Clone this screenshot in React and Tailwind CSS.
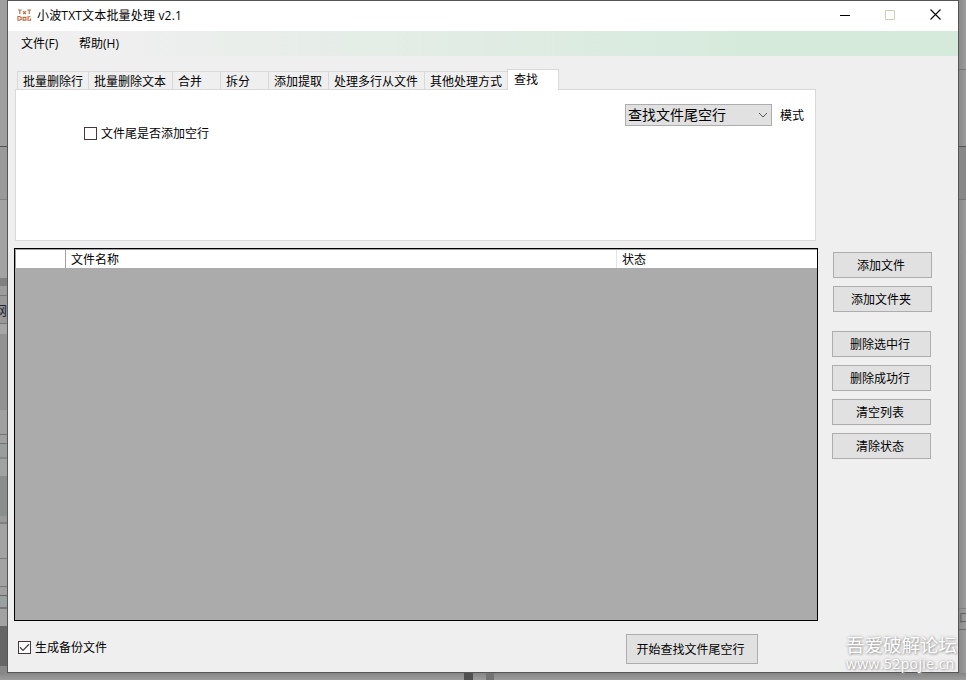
import React, { useState } from 'react';

const tabs = [
  { label: '批量删除行', width: 'w-[71px]' },
  { label: '批量删除文本', width: 'w-[84px]' },
  { label: '合并', width: 'w-[48px]' },
  { label: '拆分', width: 'w-[48px]' },
  { label: '添加提取', width: 'w-[60px]' },
  { label: '处理多行从文件', width: 'w-[96px]' },
  { label: '其他处理方式', width: 'w-[83px]' },
  { label: '查找', width: 'w-[52px]' },
];

// bands of the page that shows behind the window, top to bottom
const leftBands = [
  'h-[147px] bg-[#9f9f9f] border-b border-[#555555]',
  'h-[53px] bg-[#9a9a9a] border-b border-[#858585]',
  'h-[78px] bg-[#a3a3a3]',
  'h-[8px] bg-[#808080]',
  'h-[10px] bg-[#9c9c9c] border-b border-[#777777]',
];

const lowerBands = [
  'h-[10px] bg-[#a5a5a5]',
  'h-[76px] bg-[#929292]',
  'h-[25px] bg-[#a0a0a0] border-b border-[#747474]',
  'h-[9px] bg-[#a0a0a0] border-b border-[#747474]',
  'h-[15px] bg-[#999e9c] border-b-2 border-[#858a88]',
  'h-[17px] bg-[#a0a3a2]',
  'h-[40px] bg-[#8a8e8c]',
  'h-[8px] bg-[#999999] border-b-2 border-[#808080]',
  'h-[35px] bg-[#a2a2a2] border-b border-[#7c7c7c]',
  'h-[28px] bg-[#a2a2a2] border-b border-[#777777]',
  'h-[9px] bg-[#a0a0a0] border-b border-[#666666]',
  'h-[13px] bg-[#9aa09f] border-b-2 border-[#777777]',
  'h-[17px] bg-[#a2a2a2]',
  'h-[40px] bg-[#666666]',
  'h-[8px] bg-[#888888] border-b border-[#666666]',
];

const Button = ({ children, className = 'w-[99px] h-[26px]' }) => (
  <button className={`flex shrink-0 items-center justify-center border border-[#adadad] bg-[#e1e1e1] pt-[2px] pr-[3px] whitespace-nowrap ${className}`}>
    {children}
  </button>
);

const CheckBox = ({ label, defaultChecked = false }) => {
  const [checked, setChecked] = useState(defaultChecked);

  return (
    <button onClick={() => setChecked(!checked)} className="flex h-[13px] items-center gap-[4px] leading-[13px]">
      <span className="h-[13px] w-[13px] border border-[#4a3540] bg-white">
        {checked && (
          <svg width="11" height="11" viewBox="0 0 11 11" fill="none" stroke="#444444" strokeWidth="1.3">
            <path d="M1 5.3 L4 8.4 L10 2.3" />
          </svg>
        )}
      </span>
      <span className="whitespace-nowrap">{label}</span>
    </button>
  );
};

const TitleBar = () => (
  <div className="flex h-[30px] items-center bg-white">
    <svg className="mb-[2px] ml-[9px]" width="15" height="14" viewBox="0 0 16 14" fill="none" stroke="#c0683c" strokeWidth="1.2">
      <path d="M1 1.6h4M3 1.6v4.4M6.5 3l3 3M9.5 3l-3 3M11 1.6h4M13 1.6v4.4" />
      <path d="M1 8.6v4h1.5l2-1v-2l-2-1zM6.5 9.5v3h3v-3zM14.5 8.8h-2.8v3.8h2.8v-2" />
    </svg>
    <span className="ml-[5px] text-[12px] leading-[16px] tracking-[0.18px] whitespace-nowrap">小波TXT文本批量处理 v2.1</span>
    <div className="mr-[17px] mb-[3px] ml-auto flex items-center gap-[35px]">
      <svg width="10" height="11" viewBox="0 0 10 11" stroke="#000">
        <path d="M0 6.5h10" />
      </svg>
      <svg width="10" height="11" viewBox="0 0 10 11" fill="none" stroke="#d5c9b8">
        <path d="M.5 1.5h9v9h-9z" />
      </svg>
      <svg width="11" height="11" viewBox="0 0 11 11" stroke="#000" strokeWidth="1.1">
        <path d="M.5 .5l10 10M10.5 .5l-10 10" />
      </svg>
    </div>
  </div>
);

const MenuBar = () => (
  <div className="flex h-[25px] items-center bg-linear-to-r from-[#efefef] from-10% to-[#d5eadb] to-80% text-[12px]">
    <span className="ml-[13px] w-[58px]">文件(F)</span>
    <span>帮助(H)</span>
  </div>
);

const TabControl = () => {
  const [active, setActive] = useState('查找');

  return (
    <div className="ml-[7px] w-[801px]">
      <div className="flex h-[20px] items-end pl-[2px]">
        {tabs.map((tab) => (
          <button
            key={tab.label}
            onClick={() => setActive(tab.label)}
            className={`shrink-0 border-t border-l border-[#d9d9d9] text-left whitespace-nowrap ${tab.width} ${
              active === tab.label
                ? 'relative top-px h-[21px] border-r bg-white pb-px pl-[6px]'
                : 'h-[18px] bg-[#efefef] pt-px pl-[5px]'
            }`}
          >
            {tab.label}
          </button>
        ))}
      </div>
      <div className="flex h-[152px] items-start border border-[#d9d9d9] bg-white">
        <div className="mt-[37px] ml-[68px]">
          <CheckBox label="文件尾是否添加空行" />
        </div>
        <div className="mt-[14px] mr-[11px] ml-auto flex items-center gap-[8px]">
          <div className="flex h-[22px] w-[147px] items-center justify-between border border-[#adadad] bg-[#e1e1e1] pr-[3px] pl-[2px] text-[14px] leading-[20px]">
            查找文件尾空行
            <svg width="10" height="6" viewBox="0 0 10 6" fill="none" stroke="#555555">
              <path d="M1 1l4 4 4-4" />
            </svg>
          </div>
          <span className="pt-[2px]">模式</span>
        </div>
      </div>
    </div>
  );
};

const FileGrid = () => (
  <div className="flex h-[373px] w-[804px] flex-col border border-black bg-[#ababab]">
    <div className="flex h-[19px] border-t border-l border-[#a0a0a0] bg-white leading-[20px]">
      <div className="w-[50px] border-r border-[#a0a0a0]" />
      <div className="w-[551px] border-r border-[#e5e5e5] pl-[5px]">文件名称</div>
      <div className="pl-[5px]">状态</div>
    </div>
  </div>
);

const Window = () => (
  <div className="relative flex h-[673px] w-[952px] flex-col border border-[#555555] bg-[#efefef]">
    <TitleBar />
    <MenuBar />
    <div className="flex flex-col pt-[13px]">
      <TabControl />
      <div className="mt-[7px] ml-[6px] flex">
        <FileGrid />
        <div className="flex flex-col gap-[8px] pt-[4px] pl-[14px]">
          <div className="ml-px flex flex-col gap-[8px]">
            <Button>添加文件</Button>
            <Button>添加文件夹</Button>
          </div>
          <div className="mt-[11px] flex flex-col gap-[8px]">
            <Button>删除选中行</Button>
            <Button>删除成功行</Button>
            <Button>清空列表</Button>
            <Button>清除状态</Button>
          </div>
        </div>
      </div>
      <div className="mt-[13px] flex items-start">
        <div className="mt-[7px] ml-[10px] w-[608px]">
          <CheckBox label="生成备份文件" defaultChecked />
        </div>
        <Button className="h-[30px] w-[132px]">开始查找文件尾空行</Button>
      </div>
    </div>
    <div className="absolute right-0 bottom-0 flex w-[112px] flex-col whitespace-nowrap text-white [text-shadow:0_0_3px_#999,1px_1px_2px_#aaa]">
      <span className="font-['Noto_Sans_CJK_SC',sans-serif] text-[18.5px] leading-[22px]">吾爱破解论坛</span>
      <span className="font-['Open_Sans',sans-serif] text-[14px] leading-[17px] font-medium tracking-[0.4px]">www.52pojie.cn</span>
    </div>
  </div>
);

export default function App() {
  return (
    <div className="flex h-[680px] w-[966px] flex-col overflow-hidden bg-[#9a9a9a] font-['Open_Sans','Noto_Sans_CJK_SC',sans-serif] text-[12px] leading-[18px] text-black">
      <div className="flex h-[673px]">
        <div className="flex w-[7px] shrink-0 flex-col overflow-hidden">
          {leftBands.map((band, i) => (
            <div key={i} className={`shrink-0 ${band}`} />
          ))}
          <div className="flex h-[28px] shrink-0 items-center justify-end border-b border-[#777777] bg-[#999999] text-[13px] text-[#222233]">网</div>
          {lowerBands.map((band, i) => (
            <div key={i} className={`shrink-0 ${band}`} />
          ))}
        </div>
        <Window />
        <div className="flex w-[7px] shrink-0 flex-col overflow-hidden bg-linear-to-r from-[#8a8a8a] to-[#9d9d9d]">
          <div className="h-[70px] shrink-0 border-b border-[#777777]" />
          <div className="h-[77px] shrink-0 border-b border-[#555555]" />
          <div className="h-[53px] shrink-0 border-b border-[#777777] bg-[#888888]" />
          <div className="h-[409px] shrink-0 border-b border-[#808080]" />
          <div className="h-[21px] shrink-0 border-b border-[#6c6c6c] text-[11px] text-[#555555]">口</div>
        </div>
      </div>
      <div className="flex h-[7px] bg-linear-to-b from-[#858585] to-[#9d9d9d]">
        <div className="ml-[464px] w-[9px] bg-[#505050]" />
        <div className="ml-[13px] w-[8px] bg-[#747474]" />
      </div>
    </div>
  );
}
